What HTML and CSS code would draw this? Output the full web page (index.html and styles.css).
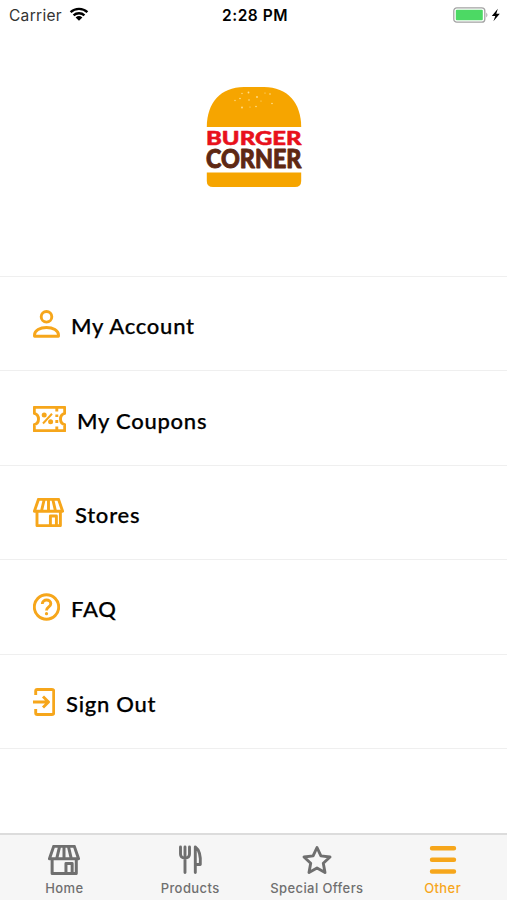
FILE: index.html
```html
<!DOCTYPE html>
<html lang="en">
  <head>
    <meta charset="UTF-8" />
    <meta name="viewport" content="width=device-width, initial-scale=1.0" />
    <title>Burger Corner</title>
    <link rel="stylesheet" href="styles.css">
  </head>
  <body>
    <!-- Shared store icon -->
    <svg class="symbols" width="0" height="0">
      <symbol id="store" viewBox="0 0 31 29">
        <path d="M5.5 1.3H25.5L29.6 13.2H1.4ZM4 13.5V27.6H27.4V13.5M11.2 1.5L8.5 13M15.5 1.5V13M19.8 1.5L22.5 13M17.4 27.5V18H23.4V27.5" />
      </symbol>
    </svg>

    <!-- Status bar -->
    <header class="status-bar">
      <div class="carrier">
        <span>Carrier</span>
        <svg width="20" height="14" viewBox="0 0 20 14">
          <path d="M1.6 5.2C6.3.7 13.7.7 18.4 5.2M4.6 8.3C7.6 5.5 12.4 5.5 15.4 8.3" fill="none" stroke="#000" stroke-width="2.4" />
          <path d="M10 13.8L6.6 10.5Q10 7.6 13.4 10.5Z" />
        </svg>
      </div>
      <span class="time">2:28 PM</span>
      <div class="battery">
        <svg width="48" height="16" viewBox="0 0 48 16">
          <rect x=".8" y=".8" width="31" height="14.4" rx="3" fill="#fff" stroke="#a3a3a3" stroke-width="1.3" />
          <rect x="2.8" y="2.8" width="27" height="10.4" rx="1" fill="#4cd964" />
          <path d="M33.4 5.5Q35.4 8 33.4 10.5Z" fill="#999" />
          <path d="M44.8 1.8L38.8 9H42.3L40.4 14.3L46.8 6.8H43.3Z" />
        </svg>
      </div>
    </header>

    <!-- Logo -->
    <div class="logo">
      <svg width="104" height="102" viewBox="-4 0 104 102">
        <path d="M.8 41C.8 17 14.5 1 38 1H58C81.5 1 95.2 17 95.2 41Z" fill="#f6a500" />
        <g fill="#ffdf91">
          <circle cx="42.5" cy="6.5" r=".9" />
          <circle cx="36" cy="7.5" r=".7" />
          <circle cx="51" cy="11" r=".9" />
          <circle cx="59" cy="7" r=".6" />
          <circle cx="64" cy="8" r=".8" />
          <circle cx="34" cy="12.5" r=".8" />
          <circle cx="29" cy="14.5" r=".7" />
          <circle cx="43" cy="14" r=".8" />
          <circle cx="55" cy="15" r=".6" />
          <circle cx="66" cy="17.5" r=".8" />
          <circle cx="36" cy="21.5" r=".9" />
          <circle cx="50" cy="20.5" r=".8" />
          <circle cx="44" cy="21" r=".6" />
        </g>
        <text class="logo-burger" x="0" y="58.6" textLength="95.5" lengthAdjust="spacingAndGlyphs">BURGER</text>
        <text class="logo-corner" x="0" y="82" textLength="95.5" lengthAdjust="spacingAndGlyphs">CORNER</text>
        <path d="M.8 86.5H95.2V95Q95.2 101 89 101H7Q.8 101 .8 95Z" fill="#f6a500" />
      </svg>
    </div>

    <!-- Menu -->
    <nav class="menu">
      <a class="menu-item">
        <svg width="27" height="28" viewBox="0 0 27 28">
          <circle cx="13.5" cy="6.8" r="5.3" />
          <path d="M1.5 26.2V25C1.5 20.5 7 17.5 13.5 17.5S25.5 20.5 25.5 25V26.2Z" />
        </svg>
        <span>My Account</span>
      </a>
      <a class="menu-item">
        <svg width="33" height="26" viewBox="0 0 33 26">
          <path d="M1.3 1.4H31.7V7.3Q27.5 8.5 27.5 13T31.7 18.7V24.6H1.3V18.7Q5.5 17.5 5.5 13T1.3 7.3Z" />
          <path d="M10 17.5L19 7.8" stroke-width="2" />
          <circle class="solid" cx="11.2" cy="9" r="2.5" />
          <circle class="solid" cx="17.6" cy="15.8" r="2.5" />
          <path d="M23.8 2V5.5M23.8 8.5V11M23.8 14V17M23.8 20.5V24" />
        </svg>
        <span>My Coupons</span>
      </a>
      <a class="menu-item">
        <svg width="31" height="29"><use href="#store" /></svg>
        <span>Stores</span>
      </a>
      <a class="menu-item">
        <svg width="27" height="28" viewBox="0 0 27 28">
          <circle cx="13.5" cy="14" r="12.2" />
          <path d="M9.3 11C9.3 5.7 17.8 5.7 17.8 10.7C17.8 14 13.5 13.7 13.5 17.5" />
          <circle class="solid" cx="13.5" cy="20.7" r="1.6" />
        </svg>
        <span>FAQ</span>
      </a>
      <a class="menu-item">
        <svg width="22" height="28" viewBox="0 0 22 28">
          <path d="M2.7 7V3Q2.7 1.5 4.2 1.5H19Q20.7 1.5 20.7 3V25Q20.7 26.5 19 26.5H4.2Q2.7 26.5 2.7 25V21M0 14H15M10 8.5L15.5 14L10 19.5" />
        </svg>
        <span>Sign Out</span>
      </a>
    </nav>

    <!-- Tab bar -->
    <footer class="tab-bar">
      <a class="tab">
        <svg width="32" height="30" viewBox="0 0 31 29"><use href="#store" /></svg>
        <span>Home</span>
      </a>
      <a class="tab">
        <svg width="32" height="30" viewBox="0 0 32 30">
          <path d="M6.5 2V9Q6.5 13 11 13T15.5 9V2M11 2V27.5M21.3 27.5V2C25.5 5 26.8 12 26.3 19.5H21.5" />
        </svg>
        <span>Products</span>
      </a>
      <a class="tab">
        <svg width="32" height="30" viewBox="0 0 32 30">
          <path d="M16 2.5L19.9 10.9L29 12L22.3 18.3L24 27.5L16 23L8 27.5L9.7 18.3L3 12L12.1 10.9Z" />
        </svg>
        <span>Special Offers</span>
      </a>
      <a class="tab active">
        <svg width="32" height="30" viewBox="0 0 32 30">
          <path d="M5 3.3H27M5 14.8H27M5 26.5H27" />
        </svg>
        <span>Other</span>
      </a>
    </footer>
  </body>
</html>
```
FILE: styles.css
```css
/* Global Styles */
* {
  box-sizing: border-box;
}

body {
  margin: 0;
  height: 900px;
  display: flex;
  flex-direction: column;
  overflow: hidden;
  background-color: #fff;
  color: #000;
  font-family: "Inter", sans-serif;
}

.symbols {
  display: none;
}

/* Status bar */
.status-bar {
  height: 30px;
  padding: 0 6px 0 9px;
  display: grid;
  grid-template-columns: 1fr auto 1fr;
  align-items: center;
  font-size: 15.5px;
}

.carrier {
  display: flex;
  align-items: center;
  gap: 7px;
  color: #333;
  letter-spacing: 0.3px;
}

.carrier svg {
  margin-top: -2px;
}

.time {
  font-weight: 600;
  letter-spacing: 0.5px;
}

.battery {
  display: flex;
  justify-content: flex-end;
}

/* Logo */
.logo {
  height: 246px;
  padding-top: 56px;
  display: flex;
  justify-content: center;
  align-items: flex-start;
}

.logo svg {
  overflow: visible;
}

.logo text {
  font-family: "Lato", sans-serif;
  font-weight: 900;
  stroke-linejoin: round;
}

.logo-burger {
  font-size: 18.5px;
  fill: #e8111c;
  stroke: #e8111c;
  stroke-width: 0.5;
}

.logo-corner {
  font-size: 26px;
  fill: #5e2813;
  stroke: #5e2813;
  stroke-width: 0.9;
}

/* Menu */
.menu {
  border-top: 1px solid #efefef;
}

.menu-item {
  height: 94.4px;
  padding: 0 33px;
  display: flex;
  align-items: center;
  gap: 11px;
  border-bottom: 1px solid #efefef;
  font-family: "Lato", sans-serif;
  font-size: 22px;
  font-weight: 500;
  letter-spacing: 0.75px;
  -webkit-text-stroke: 0.25px #000;
}

.menu-item span {
  padding-top: 4px;
}

.menu-item svg,
.tab svg {
  fill: none;
  stroke: currentColor;
  stroke-width: 2.9;
  stroke-linejoin: round;
}

.menu-item svg {
  margin-top: 1px;
  color: #f6a61b;
}

.menu-item .solid {
  fill: currentColor;
  stroke: none;
}

/* Tab bar */
.tab-bar {
  height: 67px;
  margin-top: auto;
  padding-top: 10px;
  display: grid;
  grid-template-columns: repeat(4, 1fr);
  border-top: 2px solid #dcdcdc;
  background-color: #f6f6f6;
}

.tab {
  display: flex;
  flex-direction: column;
  align-items: center;
  gap: 4px;
  color: #6f6f6f;
  font-size: 13px;
  font-weight: 500;
  line-height: 18px;
  letter-spacing: 0.4px;
}

.tab svg {
  stroke-linecap: round;
}

.tab.active {
  color: #f6a61b;
}

.tab.active svg {
  stroke-width: 4.4;
}

.tab:first-child {
  padding-left: 2px;
}

.tab:last-child {
  padding-right: 2px;
}
```
